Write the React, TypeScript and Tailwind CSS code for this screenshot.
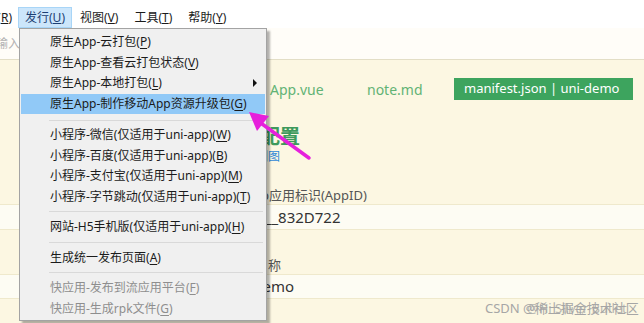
import React from "react";

type Item = { label: string; key: string; disabled?: boolean; hl?: boolean; sub?: boolean };

const groups: Item[][] = [
  [
    { label: "原生App-云打包", key: "P" },
    { label: "原生App-查看云打包状态", key: "V" },
    { label: "原生App-本地打包", key: "L", sub: true },
    { label: "原生App-制作移动App资源升级包", key: "G", hl: true },
  ],
  [
    { label: "小程序-微信(仅适用于uni-app)", key: "W" },
    { label: "小程序-百度(仅适用于uni-app)", key: "B" },
    { label: "小程序-支付宝(仅适用于uni-app)", key: "M" },
    { label: "小程序-字节跳动(仅适用于uni-app)", key: "T" },
  ],
  [{ label: "网站-H5手机版(仅适用于uni-app)", key: "H" }],
  [{ label: "生成统一发布页面", key: "A" }],
  [
    { label: "快应用-发布到流应用平台", key: "F", disabled: true },
    { label: "快应用-生成rpk文件", key: "G", disabled: true },
  ],
];

function MenuRow({ it }: { it: Item }) {
  return (
    <div
      className={
        "relative flex h-[20.5px] items-center pl-[29px] text-[12px] leading-[20px] " +
        (it.hl ? "bg-[#91c9f7] " : "") +
        (it.disabled ? "text-[#8e8e8e]" : "text-[#1b1b1b]")
      }
    >
      <span>
        {it.label}(<span className="underline underline-offset-2">{it.key}</span>)
      </span>
      {it.sub && (
        <span className="ml-auto mr-[8px] h-0 w-0 border-y-[4px] border-l-[4px] border-y-transparent border-l-[#111]" />
      )}
    </div>
  );
}

export default function App() {
  return (
    <div className="relative h-[323px] w-[644px] overflow-hidden bg-[#fcf7e2] font-['Noto_Sans','Noto_Sans_CJK_SC',sans-serif]">
      {/* menu bar */}
      <div className="flex h-[28px] items-end bg-white text-[12px] text-[#1b1b1b]">
        <div className="ml-[-40px] flex h-[21px] w-[58px] items-center justify-end pr-[6px]">
          运行(<span className="underline">R</span>)
        </div>
        <div className="flex h-[21px] w-[54px] items-center justify-center border border-[#a8d5f7] bg-[#cce6fb] text-[#1d3f74]">
          发行(<span className="underline">U</span>)
        </div>
        <div className="flex h-[21px] items-center pl-[8px] pr-[8px]">
          视图(<span className="underline">V</span>)
        </div>
        <div className="flex h-[21px] items-center px-[8px]">
          工具(<span className="underline">T</span>)
        </div>
        <div className="flex h-[21px] items-center px-[8px]">
          帮助(<span className="underline">Y</span>)
        </div>
      </div>

      {/* toolbar */}
      <div className="flex h-[32px] items-center border-b border-[#e3dec6] bg-[#fffdf8]">
        <span className="ml-[-4px] text-[12px] text-[#b3b3b3]">输入...</span>
      </div>

      {/* editor */}
      <div className="flex flex-col">
        <div className="mt-[18px] flex h-[22px] items-center pl-[270px] text-[14px] text-[#62b375]">
          <span className="w-[97px]">App.vue</span>
          <span className="w-[87px]">note.md</span>
          <span className="flex h-[22px] w-[179px] items-center bg-[#3da45e] pl-[10px] text-[13px] text-white">
            manifest.json | uni-demo
          </span>
        </div>

        <div className="mt-[25px] h-[24px] pl-[220px] text-[20px] font-bold leading-[24px] text-[#3d9a5c]">
          基础配置
        </div>
        <div className="h-[16px] pl-[244px] text-[12px] leading-[16px] text-[#2e88d8]">示例图</div>

        <div className="mt-[22px] h-[17px] pl-[222px] text-[13px] leading-[17px] text-[#555]">
          uni-app应用标识(AppID)
        </div>
        <div className="flex h-[26px] items-center border-y border-[#efe9cc] bg-[#fdfcf3] pl-[224px] text-[15px] text-[#333]">
          __UNI__832D722
        </div>

        <div className="mt-[27px] h-[17px] pl-[229px] text-[13px] leading-[17px] text-[#555]">应用名称</div>
        <div className="flex h-[25px] items-center border-y border-[#efe9cc] bg-[#fdfcf3] pl-[226px] text-[15px] text-[#333]">
          uni-demo
        </div>
      </div>

      {/* dropdown menu */}
      <div className="absolute left-[19px] top-[28px] w-[248px] border border-[#a3a3a3] bg-[#f0f0f0] px-[1px] pb-[1px] pt-[3px] shadow-[3px_3px_2px_rgba(0,0,0,0.3)]">
        {groups.map((g, gi) => (
          <div key={gi}>
            {gi > 0 && (
              <div className={gi === 1 ? "pb-[4px] pt-[6px]" : "pb-[5px] pt-[4px]"}>
                <div className="ml-[28px] mr-[2px] h-[1px] bg-[#d9d9d9]" />
              </div>
            )}
            {g.map((it, ii) => (
              <MenuRow key={ii} it={it} />
            ))}
          </div>
        ))}
      </div>

      {/* pink arrow */}
      <svg className="absolute left-0 top-0" width="644" height="323" viewBox="0 0 644 323">
        <line x1="309" y1="158" x2="258" y2="121" stroke="#e620dc" strokeWidth="3.5" strokeLinecap="round" />
        <polygon points="249,112 269,116 257,131" fill="#e620dc" />
      </svg>

      {/* watermark */}
      <div className="absolute left-[485px] top-[299px] whitespace-nowrap text-[13px] text-[#a6a6a6]">CSDN @稀土掘金技术社区</div>
      <div className="absolute left-[527px] top-[299px] whitespace-nowrap text-[13px] text-[#a6a6a6] opacity-80">@Hi Silver Bullet</div>
    </div>
  );
}
